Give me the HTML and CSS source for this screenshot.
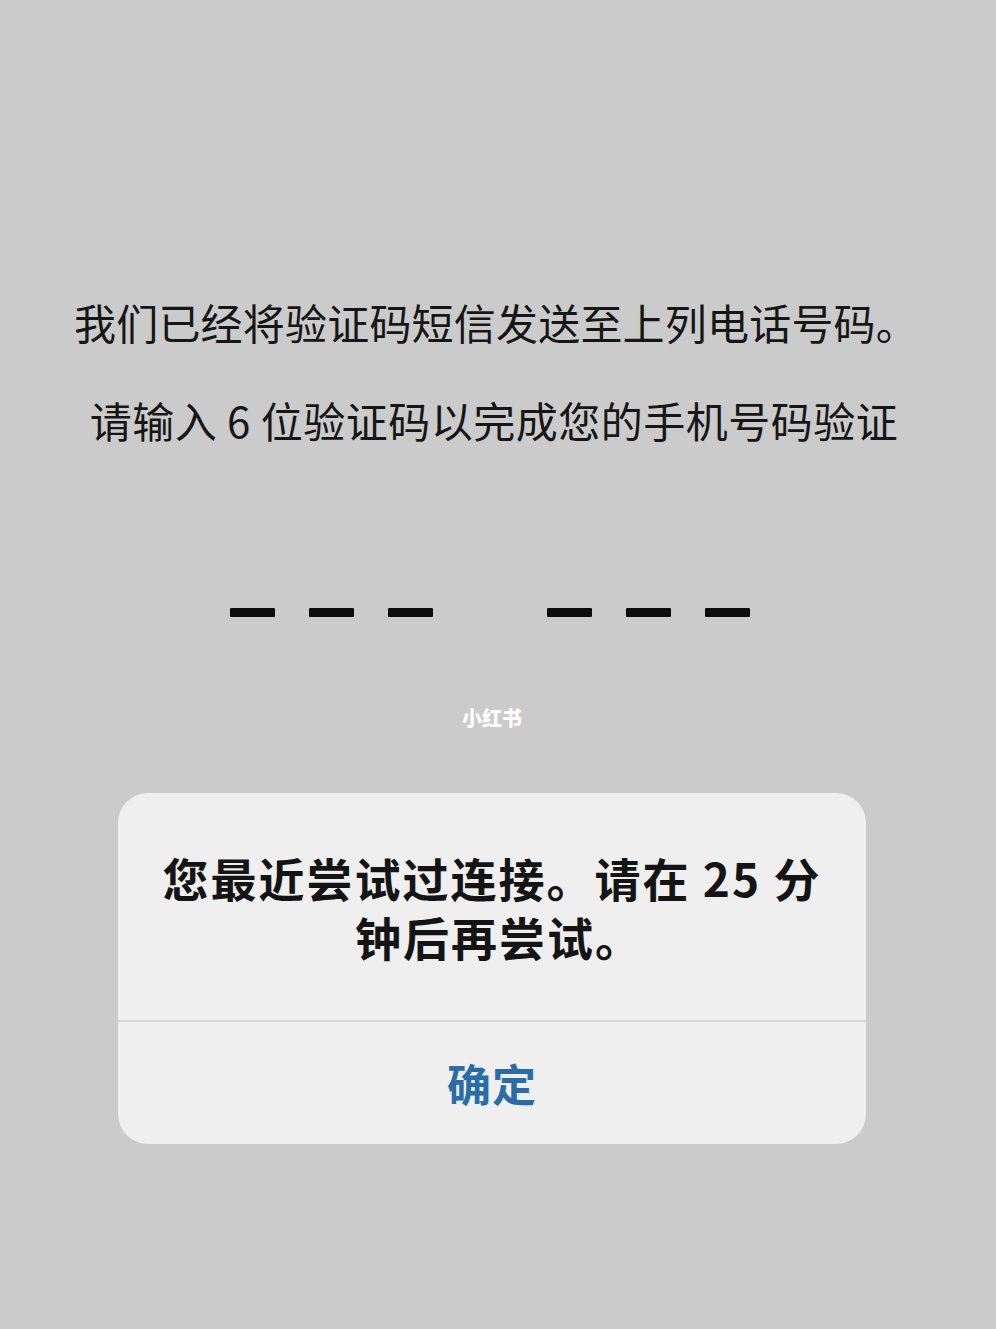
FILE: index.html
```html
<!DOCTYPE html>
<html lang="zh-CN">
<head>
<meta charset="utf-8">
<link rel="stylesheet" href="styles.css">
</head>
<body>
<main class="screen">
  <p class="info">我们已经将验证码短信发送至上列电话号码。</p>
  <p class="info second">请输入 6 位验证码以完成您的手机号码验证</p>
  <div class="code">
    <div class="group"><span class="dash"></span><span class="dash"></span><span class="dash"></span></div>
    <div class="group"><span class="dash"></span><span class="dash"></span><span class="dash"></span></div>
  </div>
  <div class="mark">小红书</div>
  <section class="dialog">
    <div class="message"><span class="line">您最近尝试过连接。请在 25 分</span><span class="line second-line">钟后再尝试。</span></div>
    <div class="action">确定</div>
  </section>
</main>
</body>
</html>
```
FILE: styles.css
```css
html, body {
  margin: 0;
  padding: 0;
  background: #cbcbcb;
}
body {
  width: 996px;
  height: 1329px;
  overflow: hidden;
  font-family: "Noto Sans CJK SC", "Noto Sans", sans-serif;
}
.screen {
  display: flex;
  flex-direction: column;
  align-items: center;
  padding-top: 297px;
}
.info {
  margin: 0;
  font-size: 42px;
  line-height: 50px;
  color: #161616;
  letter-spacing: 0.2px;
  padding-right: 4px;
}
.second {
  margin-top: 48px;
  padding-right: 8px;
  padding-left: 0;
  letter-spacing: 0.5px;
}
.code {
  display: flex;
  gap: 114px;
  margin-top: 163px;
  padding-right: 16px;
}
.group {
  display: flex;
  gap: 34px;
}
.dash {
  display: block;
  width: 45px;
  height: 9px;
  background: #0d0d0d;
  border-radius: 1px;
}
.mark {
  margin-top: 88px;
  font-size: 20px;
  line-height: 26px;
  font-weight: 900;
  color: #ffffff;
  padding-right: 12px;
}
.dialog {
  margin-top: 62px;
  width: 748px;
  margin-right: 12px;
  background: #efefef;
  border-radius: 30px;
  display: flex;
  flex-direction: column;
  overflow: hidden;
}
.message {
  padding: 55px 20px 54px;
  display: flex;
  flex-direction: column;
  align-items: center;
  font-size: 46px;
  line-height: 59px;
  font-weight: 700;
  letter-spacing: 2px;
  color: #141414;
  border-bottom: 2px solid #d6d6d6;
}
.line {
  display: block;
  white-space: nowrap;
}
.second-line {
  padding-left: 14px;
}
.action {
  height: 122px;
  display: flex;
  align-items: center;
  justify-content: center;
  font-size: 44px;
  font-weight: 700;
  letter-spacing: 1px;
  color: #2a6ca6;
}
```
